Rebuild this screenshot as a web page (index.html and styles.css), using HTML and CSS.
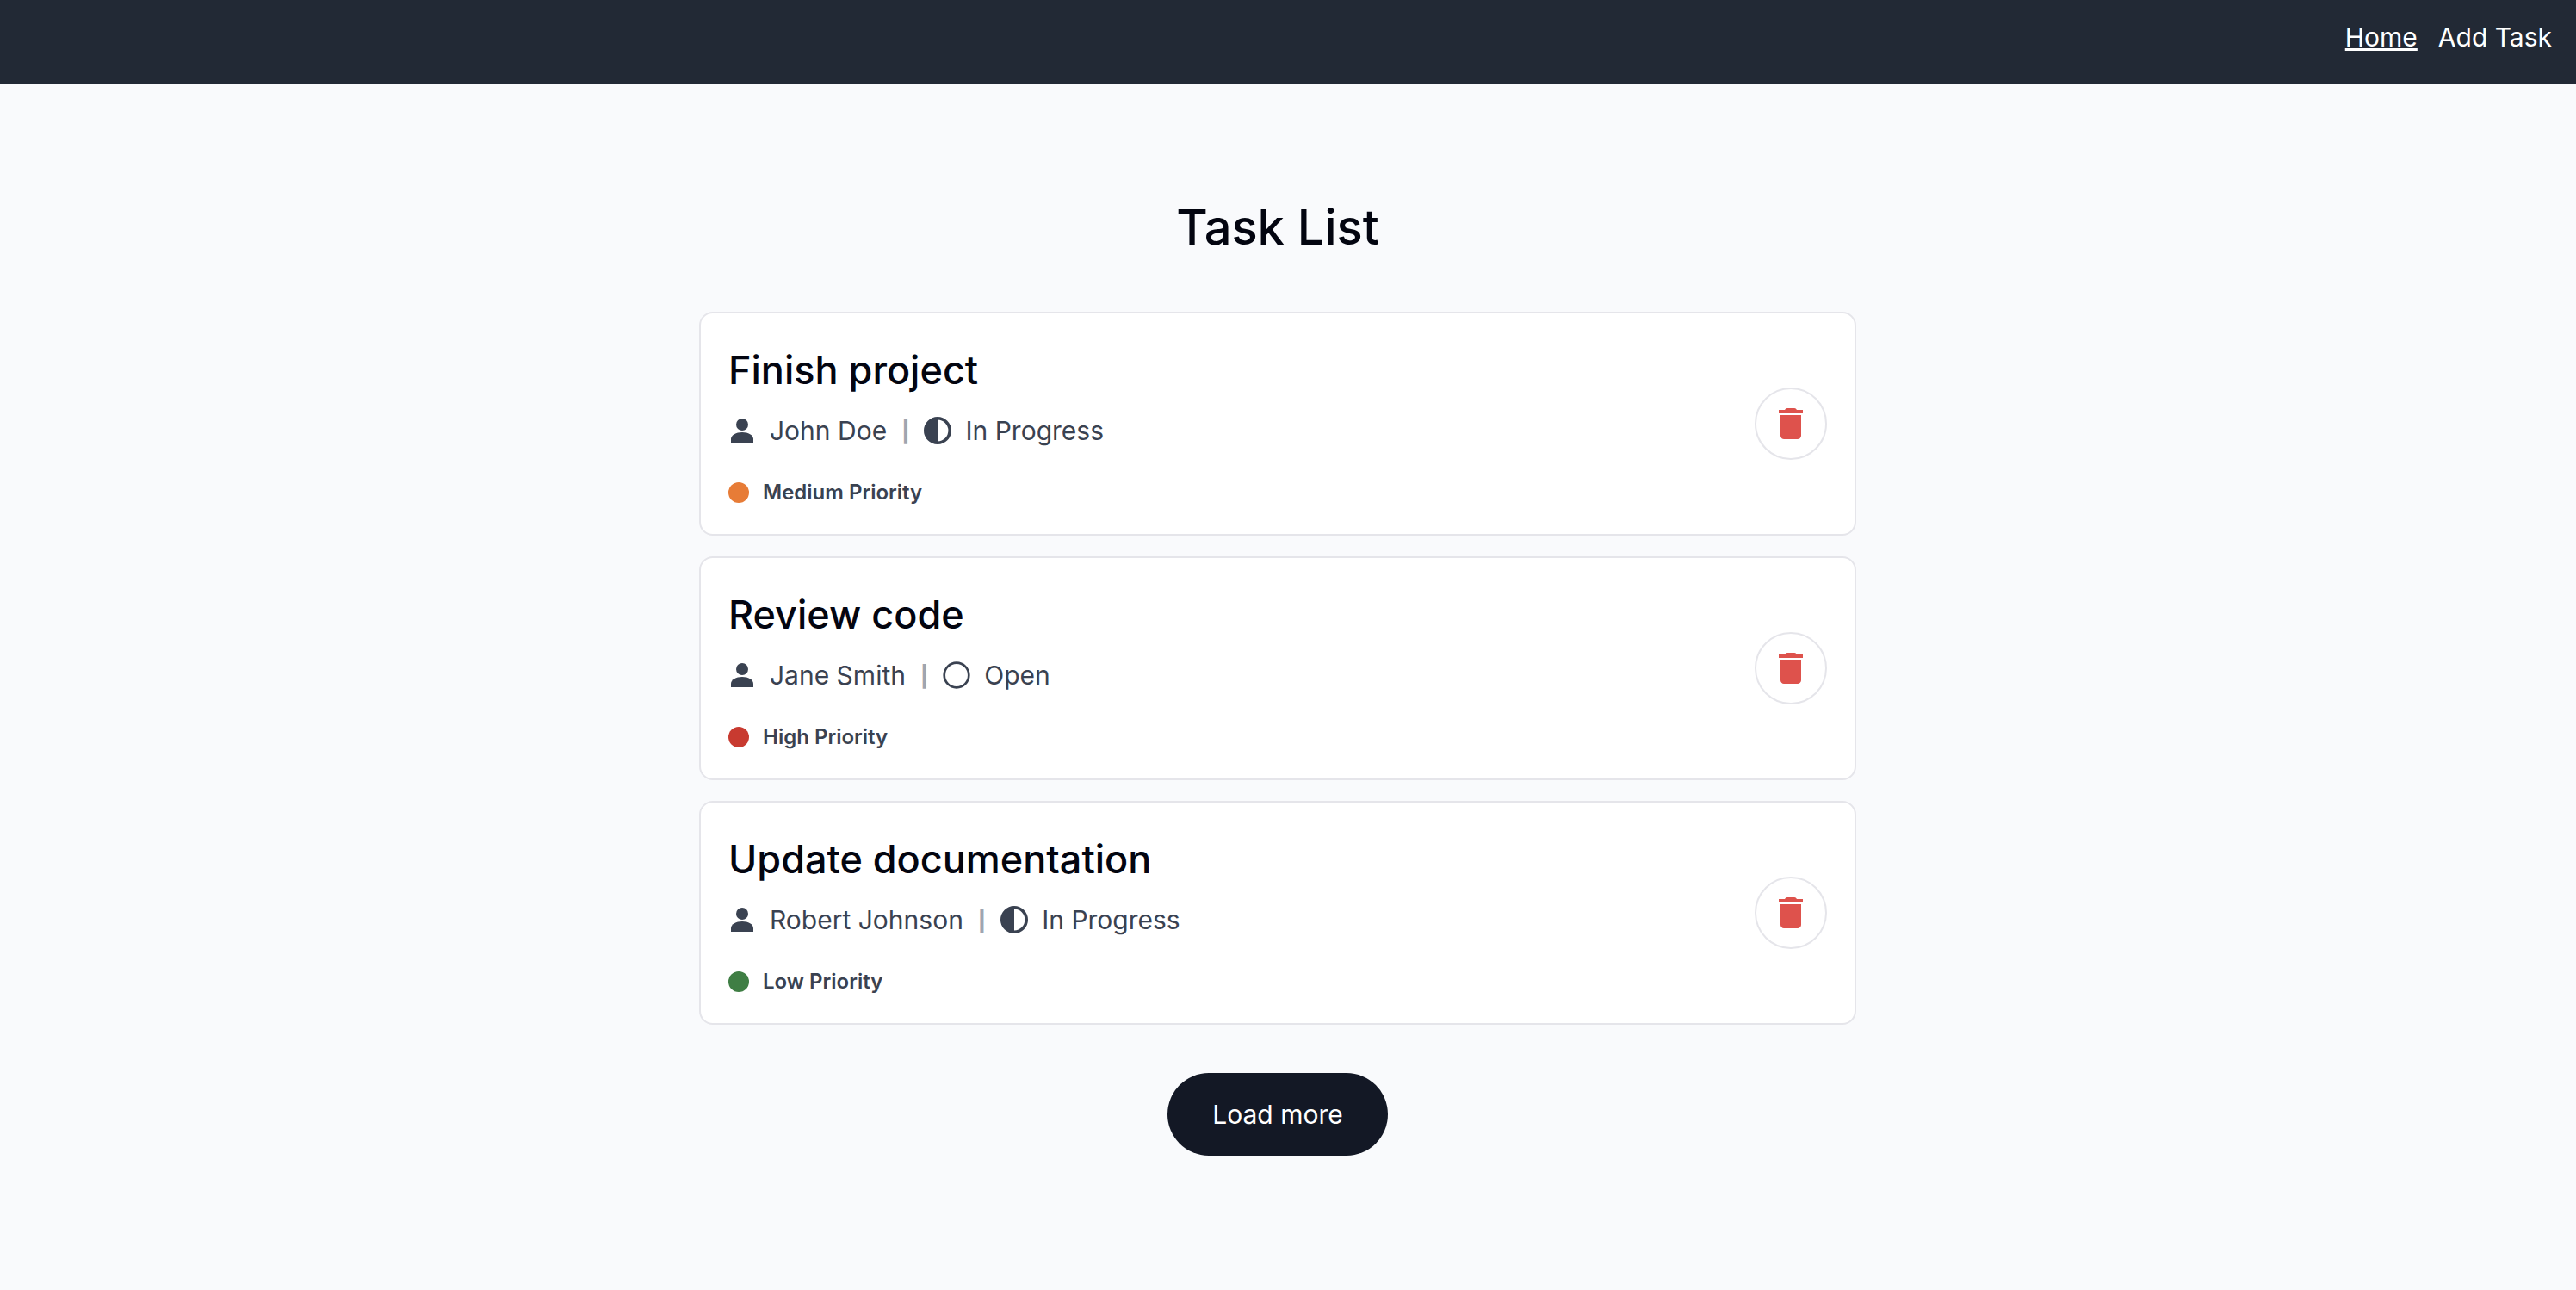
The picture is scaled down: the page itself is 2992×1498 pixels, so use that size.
FILE: index.html
```html
<!DOCTYPE html>
<html lang="en">
<head>
<meta charset="utf-8">
<title>Task List</title>
<link rel="stylesheet" href="styles.css">
</head>
<body>
<svg class="sprite" aria-hidden="true">
  <symbol id="person" viewBox="0 0 32 32"><circle cx="16" cy="9" r="7"/><path d="M3 30V26C3 21 9 18 16 18S29 21 29 26V30Z"/></symbol>
  <symbol id="progress" viewBox="0 0 32 32"><circle cx="16" cy="16" r="14.200" fill="none" stroke="currentColor" stroke-width="3.600"/><path d="M16 1A15 15 0 0 0 16 31Z"/></symbol>
  <symbol id="open" viewBox="0 0 32 32"><circle cx="16" cy="16" r="14.300" fill="none" stroke="currentColor" stroke-width="2.700"/></symbol>
  <symbol id="trash" viewBox="0 0 24 24"><path d="M6 19c0 1.1.9 2 2 2h8c1.1 0 2-.9 2-2V7H6v12zM19 4h-3.5l-.6-.7c-.2-.2-.5-.3-.8-.3H9.900c-.3 0-.6.1-.8.3l-.6.7H5v2h14V4z"/></symbol>
</svg>
<header class="header">
  <nav class="nav">
    <a class="nav-link active" href="#">Home</a>
    <a class="nav-link" href="#add">Add Task</a>
  </nav>
</header>
<main class="main">
  <h1 class="page-title">Task List</h1>
  <ul class="tasks">
    <li class="card">
      <div class="details">
        <h2 class="card-title">Finish project</h2>
        <div class="meta"><svg class="icon"><use href="#person"/></svg><span>John Doe</span><span class="bar">|</span><svg class="icon"><use href="#progress"/></svg><span>In Progress</span></div>
        <div class="priority"><span class="dot medium"></span>Medium Priority</div>
      </div>
      <button class="delete" type="button" aria-label="Delete Finish project"><svg class="trash"><use href="#trash"/></svg></button>
    </li>
    <li class="card">
      <div class="details">
        <h2 class="card-title">Review code</h2>
        <div class="meta"><svg class="icon"><use href="#person"/></svg><span>Jane Smith</span><span class="bar">|</span><svg class="icon"><use href="#open"/></svg><span>Open</span></div>
        <div class="priority"><span class="dot high"></span>High Priority</div>
      </div>
      <button class="delete" type="button" aria-label="Delete Review code"><svg class="trash"><use href="#trash"/></svg></button>
    </li>
    <li class="card">
      <div class="details">
        <h2 class="card-title">Update documentation</h2>
        <div class="meta"><svg class="icon"><use href="#person"/></svg><span>Robert Johnson</span><span class="bar">|</span><svg class="icon"><use href="#progress"/></svg><span>In Progress</span></div>
        <div class="priority"><span class="dot low"></span>Low Priority</div>
      </div>
      <button class="delete" type="button" aria-label="Delete Update documentation"><svg class="trash"><use href="#trash"/></svg></button>
    </li>
  </ul>
  <button class="load-more" type="button">Load more</button>
</main>
</body>
</html>
```
FILE: styles.css
```css
* { box-sizing: border-box; margin: 0; padding: 0; }
body {
  background: #f9fafc;
  color: #030510;
  font: 400 30px/48px Inter, "Liberation Sans", sans-serif;
}
button { font: inherit; cursor: pointer; }
.sprite { display: none; }
.header { background: #222935; padding: 19px 28px 31px; }
.nav { display: flex; justify-content: flex-end; gap: 24px; }
.nav-link { color: #fff; text-decoration: none; }
.nav-link.active {
  text-decoration: underline;
  text-decoration-thickness: 3px;
  text-underline-offset: 2px;
}
.main {
  display: flex;
  flex-direction: column;
  align-items: center;
  padding: 128px 24px 128px 0;
}
.page-title { font-size: 56px; line-height: 76px; font-weight: 500; margin-bottom: 60px; }
.tasks {
  display: flex;
  flex-direction: column;
  gap: 24px;
  width: 100%;
  max-width: 1344px;
  margin-bottom: 56px;
  list-style: none;
}
.card {
  display: flex;
  align-items: center;
  justify-content: space-between;
  padding: 32px;
  border: 2px solid #e5e5ea;
  border-radius: 16px;
  background: #fff;
}
.card-title { font-size: 45px; line-height: 68px; font-weight: 500; margin-bottom: 12px; }
.meta { display: flex; align-items: center; gap: 16px; color: #3a4251; margin-bottom: 32px; }
.icon { width: 32px; height: 32px; fill: currentColor; }
.bar { padding: 4px 1px 0; font-size: 24px; line-height: 44px; font-weight: 800; color: #9fa5b1; }
.priority {
  display: flex;
  align-items: center;
  gap: 16px;
  font-size: 24px;
  line-height: 32px;
  font-weight: 600;
  color: #3a4251;
}
.dot { width: 24px; height: 24px; border-radius: 50%; }
.medium { background: #e77c37; }
.high { background: #c83a30; }
.low { background: #3f7e44; }
.delete {
  display: grid;
  place-items: center;
  width: 84px;
  height: 84px;
  border: 2px solid #e5e5ea;
  border-radius: 50%;
  background: #fff;
  color: #de524c;
}
.trash { width: 48px; height: 48px; fill: currentColor; }
.load-more {
  padding: 24px 52px;
  border: 0;
  border-radius: 48px;
  background: #131825;
  color: #fff;
}
```
